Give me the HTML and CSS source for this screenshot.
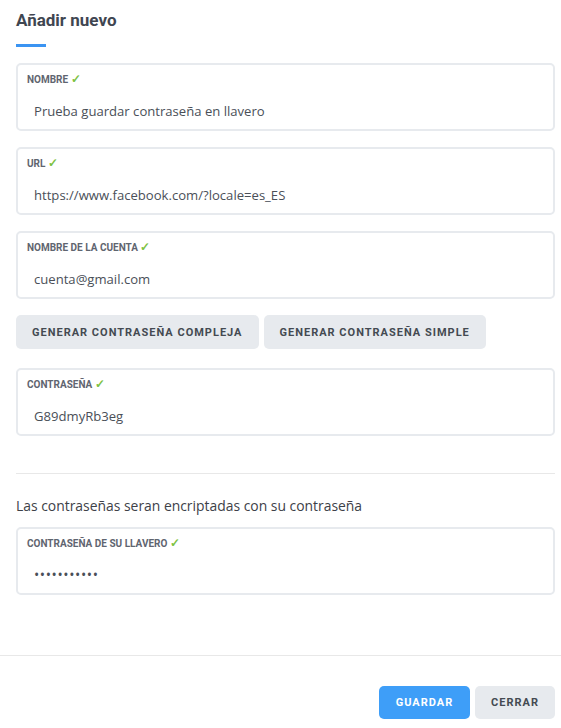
FILE: index.html
```html
<!DOCTYPE html>
<html lang="es">
<head>
<meta charset="utf-8">
<title>Añadir nuevo</title>
<link rel="stylesheet" href="styles.css">
</head>
<body>
<div class="modal">
  <div class="content">
    <h1 class="title">Añadir nuevo</h1>
    <div class="title-bar"></div>

    <div class="field">
      <div class="label">NOMBRE <span class="check">✓</span></div>
      <div class="value">Prueba guardar contraseña en llavero</div>
    </div>
    <div class="field">
      <div class="label">URL <span class="check">✓</span></div>
      <div class="value">https://www.facebook.com/?locale=es_ES</div>
    </div>
    <div class="field">
      <div class="label">NOMBRE DE LA CUENTA <span class="check">✓</span></div>
      <div class="value">cuenta@gmail.com</div>
    </div>

    <div class="gen-row">
      <button class="btn btn-gray">GENERAR CONTRASEÑA COMPLEJA</button>
      <button class="btn btn-gray">GENERAR CONTRASEÑA SIMPLE</button>
    </div>

    <div class="field">
      <div class="label">CONTRASEÑA <span class="check">✓</span></div>
      <div class="value">G89dmyRb3eg</div>
    </div>

    <hr class="divider">

    <p class="note">Las contraseñas seran encriptadas con su contraseña</p>

    <div class="field">
      <div class="label">CONTRASEÑA DE SU LLAVERO <span class="check">✓</span></div>
      <div class="value dots">•••••••••••</div>
    </div>
  </div>

  <div class="footer">
    <button class="btn btn-blue btn-save">GUARDAR</button>
    <button class="btn btn-gray btn-close">CERRAR</button>
  </div>
</div>
</body>
</html>
```

FILE: styles.css
```css
* { box-sizing: border-box; }

html, body {
  margin: 0;
  padding: 0;
  background: #ffffff;
}

body {
  font-family: "Open Sans", "Noto Sans", sans-serif;
  color: #4a4f58;
}

.modal {
  width: 561px;
  height: 728px;
  display: flex;
  flex-direction: column;
}

.content {
  padding: 0 6px 0 16px;
  display: flex;
  flex-direction: column;
  flex: 1;
}

.title {
  margin: 8px 0 0;
  font-family: Roboto, "Liberation Sans", sans-serif;
  font-weight: 700;
  font-size: 17px;
  line-height: 24px;
  color: #3f4651;
}

.title-bar {
  width: 30px;
  height: 3px;
  background: #3b94f2;
  margin-top: 12px;
  margin-bottom: 16px;
}

.field {
  height: 68px;
  border: 2px solid #e7eaee;
  border-radius: 5px;
  padding: 8px 0 0 9px;
  margin-bottom: 16px;
}

.label {
  font-family: Roboto, "Liberation Sans", sans-serif;
  font-weight: 700;
  font-size: 10px;
  line-height: 13px;
  color: #5f6570;
}

.check {
  color: #7dc242;
  font-size: 12px;
  font-weight: 700;
}

.value {
  margin: 15px 0 0 7px;
  font-size: 13.1px;
  line-height: 20px;
  color: #4a4f58;
}

.value.dots {
  letter-spacing: 0.6px;
  font-size: 14px;
  margin-top: 15px;
}

.gen-row {
  display: flex;
  gap: 5px;
  margin-bottom: 19px;
}

.btn {
  border: none;
  border-radius: 5px;
  font-family: Roboto, "Liberation Sans", sans-serif;
  font-weight: 700;
  font-size: 11px;
  letter-spacing: 1px;
  height: 34px;
  padding: 0 16px;
  cursor: pointer;
}

.btn-gray {
  background: #e7eaee;
  color: #444a52;
}

.btn-blue {
  background: #3e9ef8;
  color: #ffffff;
}

.footer .btn {
  height: 33px;
}

.footer .btn-save {
  width: 91px;
  padding: 0;
}

.footer .btn-close {
  width: 80px;
  padding: 0;
}

.divider {
  border: none;
  border-top: 1px solid #e8e8e8;
  margin: 21px 0 0;
}

.note {
  margin: 22px 0 11px;
  font-size: 13.9px;
  line-height: 20px;
  color: #3d4148;
}

.footer {
  border-top: 1px solid #e8e8e8;
  display: flex;
  justify-content: flex-end;
  gap: 5px;
  padding: 30px 6px 0 0;
  height: 73px;
}
```
